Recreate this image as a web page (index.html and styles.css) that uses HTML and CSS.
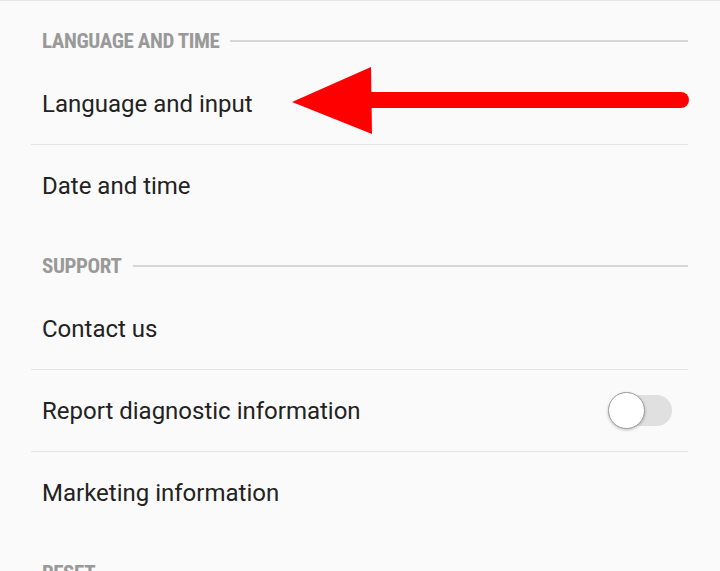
FILE: index.html
```html
<!DOCTYPE html>
<html lang="en">
<head>
  <meta charset="UTF-8" />
  <meta name="viewport" content="width=device-width, initial-scale=1" />
  <title>Settings</title>
  <link rel="stylesheet" href="styles.css">
</head>
<body>

  <div class="settings">
    <div class="section-header"><span>LANGUAGE AND TIME</span></div>
    <div class="item">Language and input</div>
    <div class="item">Date and time</div>

    <div class="section-header"><span>SUPPORT</span></div>
    <div class="item">Contact us</div>
    <div class="item">
      Report diagnostic information
      <div class="switch"><div class="knob"></div></div>
    </div>
    <div class="item">Marketing information</div>

    <div class="section-header"><span>RESET</span></div>
  </div>

  <svg class="arrow" width="720" height="160" viewBox="0 0 720 160">
    <line x1="368" y1="100" x2="681" y2="100" stroke="#ff0000" stroke-width="16" stroke-linecap="round" />
    <polygon points="292,102 371,67 372,134" fill="#ff0000" />
  </svg>

</body>
</html>
```

FILE: styles.css
```css
body {
  background-color: #fafafa;
  color: #222;
  font-family: Roboto, 'Liberation Sans', sans-serif;
  margin: 0;
  height: 571px;
  overflow: hidden;
}

.settings {
  border-top: 1px solid #e6e6e6;
  padding: 0 32px 0 31px;
}

.section-header {
  display: flex;
  align-items: center;
  height: 20px;
  padding: 30px 0 12px 11px;
  color: #999;
  font-size: 21px;
  font-weight: bold;
  font-stretch: 85%;
  letter-spacing: -0.4px;
}

.section-header::after {
  content: "";
  flex: 1;
  height: 2px;
  margin-left: 11px;
  background: #d6d6d6;
}

.item {
  display: flex;
  align-items: center;
  justify-content: space-between;
  height: 81px;
  padding: 0 16px 0 11px;
  font-size: 24px;
}

.item + .item {
  border-top: 1px solid #e4e4e4;
}

.switch {
  position: relative;
  width: 52px;
  height: 31px;
  border-radius: 16px;
  background: #e0e0e0;
}

.knob {
  position: absolute;
  left: -12px;
  top: -3px;
  width: 35px;
  height: 35px;
  border-radius: 50%;
  background: #fff;
  border: 1px solid #9e9e9e;
  box-shadow: 0 1px 3px rgba(0, 0, 0, 0.25);
}

.arrow {
  position: absolute;
  left: 0;
  top: 0;
}
```
